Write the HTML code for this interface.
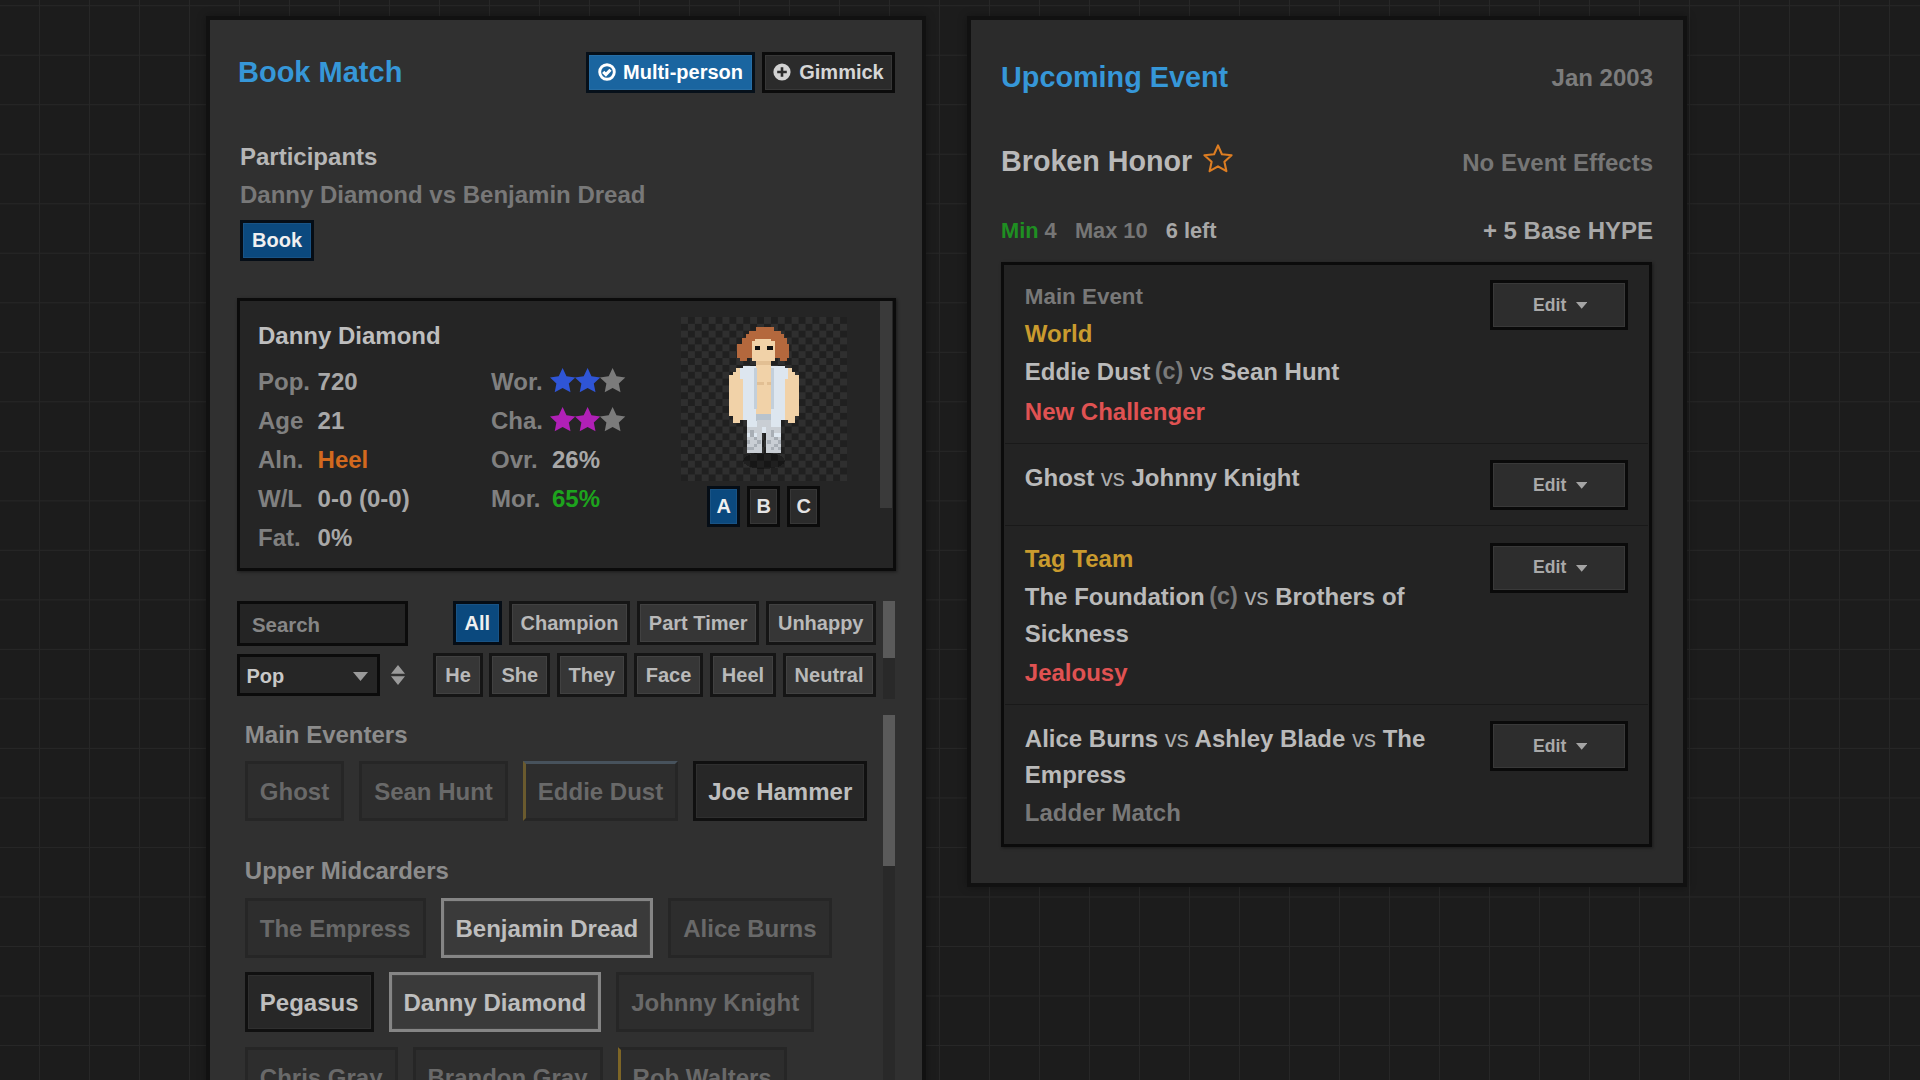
<!DOCTYPE html>
<html lang="en">
<head>
<meta charset="utf-8">
<title>Book Match</title>
<style>
*{box-sizing:border-box;margin:0;padding:0}
html,body{width:1920px;height:1080px;overflow:hidden}
body{
  background-color:#1c1c1c;
  background-image:
    linear-gradient(to right,#272727 0,#272727 1px,transparent 1px),
    linear-gradient(to bottom,#272727 0,#272727 1px,transparent 1px);
  background-size:50px 50px,50px 49.53px;
  background-position:39px 0,0 5.2px;
  font-family:"Liberation Sans",Arial,sans-serif;
  font-weight:bold;
  font-size:24px;
  color:#b4b4b4;
  position:relative;
}
.panel{position:absolute;border:4px solid #111;box-shadow:0 0 9px rgba(0,0,0,.3)}
#left{left:206px;top:16px;width:720px;height:1100px;background:#303030}
#right{left:967px;top:16px;width:720px;height:871px;background:#2b2b2b}
.abs{position:absolute;white-space:nowrap}
h1{position:absolute;font-size:29px;line-height:34px;color:#3697d8;font-weight:bold;white-space:nowrap}
h2{position:absolute;font-size:28.7px;line-height:34px;color:#b9b9b9;font-weight:bold;white-space:nowrap}
.btn{position:absolute;display:flex;align-items:center;justify-content:center;
  border:3px solid #0b0b0b;background:#303030;color:#d6d6d6;font-size:20px;white-space:nowrap;
  box-shadow:inset 0 0 0 1px rgba(255,255,255,.06)}
.btn.blue{background:#1a65a0;color:#fff;border-color:#06101a}
.btn.navy{background:#0b497e;color:#f0f0f0;border-color:#050d16}
.btn.f{background:#363636;color:#b9b9b9;border-color:#151515}
.dim{color:#7c7c7c}

#card{position:absolute;left:27px;top:278px;width:658.6px;height:272.8px;border:3px solid #0b0b0b;background:#252525;box-shadow:1px 1px 3px rgba(0,0,0,.45)}
#card .nm{position:absolute;left:18px;top:17.2px;line-height:36px;color:#bebebe;white-space:nowrap}
.st{position:absolute;line-height:36px;white-space:nowrap;color:#808080}
.st b{position:absolute;left:59.6px;top:0;color:#a8a8a8;font-weight:bold}
.st.r b{left:61px}
.st svg{position:absolute;left:59px;top:4px}
#sprite{position:absolute;left:441px;top:16px;width:166px;height:164.3px;display:block}
.ab{width:33px;height:41px;top:185px;font-size:20px;background:#2b2b2b;color:#e4e4e4}
.thumb{position:absolute;background:#3f3f3f}
.track{position:absolute;background:#292929}
#search{position:absolute;left:27px;top:581px;width:171px;height:44.5px;border:3px solid #0b0b0b;background:#242424;
  color:#868686;font-size:20.4px;line-height:42px;padding-left:12px}
#sel{position:absolute;left:27px;top:633.75px;width:142.7px;height:42px;border:3px solid #0b0b0b;background:#262626;
  color:#c8c8c8;font-size:20px;line-height:38.6px;padding-left:6.4px}
.frow{position:absolute;right:46.5px;display:flex;gap:6.5px}
.frow .btn{position:static;height:43.5px;padding:0 9px}
.gh{position:absolute;left:34.8px;line-height:36px;color:#8c8c8c;white-space:nowrap}
.rrow{position:absolute;left:34.8px;display:flex;gap:15px}
.w{height:60px;padding:2px 12px 0;border:3px solid #101010;background:#272727;color:#bebebe;display:flex;align-items:center;white-space:nowrap;
  box-shadow:inset 0 0 0 1px rgba(255,255,255,.04)}
.w.off{border-color:#262626;background:#2d2d2d;color:#696969;box-shadow:none}
.w.sel{border-color:#858585;background:#3a3a3a;color:#bebebe}

#evbox{position:absolute;left:30px;top:242px;width:651px;height:585.2px;border:3.2px solid #0b0b0b;background:#232323;box-shadow:1px 1px 3px rgba(0,0,0,.4)}
#evbox .in{position:absolute;left:.8px;top:.8px;right:0;bottom:0}
.ln{position:absolute;left:20px;line-height:36px;white-space:nowrap;color:#bababa}
.ln i{font-style:normal;font-weight:normal;color:#adadad}
.ln sup{font-size:23.4px;color:#7a7a7a;vertical-align:baseline;position:relative;top:-1px;margin-left:4.5px;line-height:0}
.sep{position:absolute;left:0;width:643px;height:1.4px;background:#191919}
.edit{left:485px;width:138px;height:50px;padding-left:2.5px;font-size:17.6px;color:#a9a9a9;background:#2d2d2d;border-color:#0a0a0a}
.edit svg{margin-left:9.3px;margin-top:1px}
.gold{color:#ca9b2e}.red{color:#e05252}.grey{color:#787878}
button{font:inherit;font-weight:bold;margin:0;padding:0;cursor:pointer;letter-spacing:normal;text-align:center}
#search{font-family:inherit;font-weight:bold;outline:none;border-radius:0;margin:0;padding-top:4px;padding-bottom:0}
#search::placeholder{color:#868686;opacity:1}
</style>
</head>
<body>

<section class="panel" id="left">
  <h1 style="left:28px;top:35px">Book Match</h1>

  <button type="button" class="btn blue" style="left:376px;top:32px;width:169px;height:41px">
    <svg width="18" height="18" viewBox="0 0 18 18" style="margin-right:7px;margin-top:-2px"><circle cx="9" cy="9" r="7.3" fill="none" stroke="#fff" stroke-width="2.9"/><path d="M5.2 8.9l2.7 2.7 4.6-4.9" fill="none" stroke="#fff" stroke-width="3.1"/></svg>Multi-person
  </button>
  <button type="button" class="btn" style="left:552px;top:32px;width:133px;height:41px;background:#2b2b2b">
    <svg width="18" height="18" viewBox="0 0 18 18" style="margin-right:8px;margin-top:-2px"><circle cx="9" cy="9" r="8.6" fill="#d2d2d2"/><path d="M9 4.2v9.6M4.2 9h9.6" stroke="#2b2b2b" stroke-width="2.6"/></svg>Gimmick
  </button>

  <div class="abs" style="left:30px;top:119px;line-height:36px;color:#b6b6b6">Participants</div>
  <div class="abs" style="left:30px;top:157px;line-height:36px;color:#787878">Danny Diamond vs Benjamin Dread</div>
  <button type="button" class="btn navy" style="left:30px;top:200px;width:74px;height:41px">Book</button>

  <div id="card">
    <div class="nm">Danny Diamond</div>
    <div class="st" style="left:18px;top:63.2px">Pop.<b>720</b></div>
    <div class="st" style="left:18px;top:102.2px">Age<b>21</b></div>
    <div class="st" style="left:18px;top:141.2px">Aln.<b style="color:#d2691e">Heel</b></div>
    <div class="st" style="left:18px;top:180.2px">W/L<b>0-0 (0-0)</b></div>
    <div class="st" style="left:18px;top:219.2px">Fat.<b>0%</b></div>
    <div class="st r" style="left:251px;top:63.2px">Wor.<svg width="76" height="25" viewBox="0 0 76 25"><g transform="translate(0,0)" fill="#2f55d6"><polygon points="12.6,0.1 16.5,8.2 25.3,9.4 18.8,15.5 20.5,24.3 12.6,20.1 4.7,24.3 6.4,15.5 -0.1,9.4 8.7,8.2" stroke-linejoin="round"/></g><g transform="translate(25,0)" fill="#2f55d6"><polygon points="12.6,0.1 16.5,8.2 25.3,9.4 18.8,15.5 20.5,24.3 12.6,20.1 4.7,24.3 6.4,15.5 -0.1,9.4 8.7,8.2" stroke-linejoin="round"/></g><g transform="translate(50,0)" fill="#7b7b7b"><polygon points="12.6,0.1 16.5,8.2 25.3,9.4 18.8,15.5 20.5,24.3 12.6,20.1 4.7,24.3 6.4,15.5 -0.1,9.4 8.7,8.2" stroke-linejoin="round"/></g></svg></div>
    <div class="st r" style="left:251px;top:102.2px">Cha.<svg width="76" height="25" viewBox="0 0 76 25"><g transform="translate(0,0)" fill="#b020b6"><polygon points="12.6,0.1 16.5,8.2 25.3,9.4 18.8,15.5 20.5,24.3 12.6,20.1 4.7,24.3 6.4,15.5 -0.1,9.4 8.7,8.2" stroke-linejoin="round"/></g><g transform="translate(25,0)" fill="#b020b6"><polygon points="12.6,0.1 16.5,8.2 25.3,9.4 18.8,15.5 20.5,24.3 12.6,20.1 4.7,24.3 6.4,15.5 -0.1,9.4 8.7,8.2" stroke-linejoin="round"/></g><g transform="translate(50,0)" fill="#7b7b7b"><polygon points="12.6,0.1 16.5,8.2 25.3,9.4 18.8,15.5 20.5,24.3 12.6,20.1 4.7,24.3 6.4,15.5 -0.1,9.4 8.7,8.2" stroke-linejoin="round"/></g></svg></div>
    <div class="st r" style="left:251px;top:141.2px">Ovr.<b>26%</b></div>
    <div class="st r" style="left:251px;top:180.2px">Mor.<b style="color:#1da31d">65%</b></div>
    <svg id="sprite" viewBox="0 0 48 48" preserveAspectRatio="none" shape-rendering="crispEdges"><defs><pattern id="ck" width="4" height="4" patternUnits="userSpaceOnUse"><rect width="4" height="4" fill="#202020"/><rect width="2" height="2" fill="#2f2f2f"/><rect x="2" y="2" width="2" height="2" fill="#2f2f2f"/></pattern></defs><rect width="48" height="48" fill="url(#ck)"/><ellipse cx="24" cy="42" rx="6" ry="2.4" fill="#000" fill-opacity=".3"/><rect x="21.6" y="3" width="5.4" height="1" fill="#b4683d"/><rect x="19.8" y="4" width="9" height="1" fill="#b4683d"/><rect x="18.7" y="5" width="11" height="1" fill="#b4683d"/><rect x="17.6" y="6" width="13" height="2" fill="#b4683d"/><rect x="16.25" y="8" width="15" height="4" fill="#b4683d"/><rect x="17" y="12" width="2" height="1" fill="#b4683d"/><rect x="28.6" y="12" width="2" height="1" fill="#b4683d"/><rect x="20.4" y="7" width="6.8" height="6" fill="#f1d2a8"/><rect x="21.5" y="6.4" width="4.6" height="1" fill="#f1d2a8"/><rect x="21.4" y="8.5" width="1.5" height="1.1" fill="#111"/><rect x="25" y="8.5" width="1.5" height="1.1" fill="#111"/><rect x="21.8" y="13" width="4.2" height="1" fill="#e2bf93"/><rect x="21.8" y="14" width="4.2" height="1" fill="#f1d2a8"/><rect x="16" y="15" width="2" height="1" fill="#f1d2a8"/><rect x="15" y="16" width="3" height="1" fill="#f1d2a8"/><rect x="14" y="17" width="4" height="12" fill="#f1d2a8"/><rect x="15" y="29" width="3" height="1" fill="#f1d2a8"/><rect x="15" y="30" width="2" height="1" fill="#f1d2a8"/><rect x="30" y="15" width="2" height="1" fill="#f1d2a8"/><rect x="30" y="16" width="3" height="1" fill="#f1d2a8"/><rect x="30" y="17" width="4" height="12" fill="#f1d2a8"/><rect x="30" y="29" width="3" height="1" fill="#f1d2a8"/><rect x="31" y="30" width="2" height="1" fill="#f1d2a8"/><rect x="18" y="14.4" width="12" height="15.6" fill="#dde6ef"/><rect x="19" y="30" width="10" height="4" fill="#dde6ef"/><rect x="17" y="15" width="1" height="3" fill="#dde6ef"/><rect x="30" y="15" width="1" height="3" fill="#dde6ef"/><rect x="21.8" y="14" width="4.2" height="14.4" fill="#f1d2a8"/><rect x="21" y="15" width="1" height="12" fill="#c3cfda"/><rect x="26" y="15" width="1" height="12" fill="#c3cfda"/><rect x="22" y="19" width="2" height="1" fill="#e2bf93"/><rect x="25" y="19" width="1" height="1" fill="#e2bf93"/><rect x="21.8" y="28.4" width="4.2" height="2" fill="#b8c3cd"/><rect x="22" y="30" width="4" height="2" fill="#c9ced4"/><rect x="19" y="32" width="4.3" height="7.6" fill="#c9ced4"/><rect x="24.7" y="32" width="4.3" height="7.6" fill="#c9ced4"/><rect x="19" y="34" width="3" height="1" fill="#dde6ef"/><rect x="26" y="34" width="3" height="1" fill="#dde6ef"/><rect x="20" y="34" width="1" height="1" fill="#a8aeb5"/><rect x="21" y="35" width="1" height="1" fill="#a8aeb5"/><rect x="19" y="36" width="1" height="1" fill="#a8aeb5"/><rect x="21" y="37" width="1" height="1" fill="#a8aeb5"/><rect x="20" y="38" width="1" height="1" fill="#a8aeb5"/><rect x="22" y="36" width="1" height="1" fill="#a8aeb5"/><rect x="20" y="33" width="1" height="1" fill="#a8aeb5"/><rect x="26" y="34" width="1" height="1" fill="#a8aeb5"/><rect x="27" y="35" width="1" height="1" fill="#a8aeb5"/><rect x="25" y="36" width="1" height="1" fill="#a8aeb5"/><rect x="27" y="37" width="1" height="1" fill="#a8aeb5"/><rect x="26" y="38" width="1" height="1" fill="#a8aeb5"/><rect x="28" y="36" width="1" height="1" fill="#a8aeb5"/><rect x="26" y="33" width="1" height="1" fill="#a8aeb5"/><rect x="19" y="38" width="1" height="1" fill="#a8aeb5"/><rect x="28" y="38" width="1" height="1" fill="#a8aeb5"/></svg>
    <button type="button" class="btn ab navy" style="left:467.3px">A</button>
    <button type="button" class="btn ab" style="left:507.3px">B</button>
    <button type="button" class="btn ab" style="left:547.3px">C</button>
    <div class="thumb" style="left:640px;top:0;width:12.4px;height:207px;background:#3a3a3a"></div>
  </div>
  <input id="search" type="text" placeholder="Search" aria-label="Search">
  <div class="frow" style="top:581.25px">
    <button type="button" class="btn navy">All</button><button type="button" class="btn f">Champion</button><button type="button" class="btn f">Part Timer</button><button type="button" class="btn f">Unhappy</button>
  </div>
  <div id="sel">Pop<svg width="15" height="9" viewBox="0 0 15 9" style="position:absolute;left:113.4px;top:15px"><path d="M0 0h15l-7.5 9z" fill="#9a9a9a"/></svg></div>
  <svg width="14" height="20" viewBox="0 0 14 20" style="position:absolute;left:181.2px;top:644.8px"><path d="M0 8.8h14l-7-8.8zM0 11.2h14l-7 8.8z" fill="#9a9a9a"/></svg>
  <div class="frow" style="top:633.3px">
    <button type="button" class="btn f">He</button><button type="button" class="btn f">She</button><button type="button" class="btn f">They</button><button type="button" class="btn f">Face</button><button type="button" class="btn f">Heel</button><button type="button" class="btn f">Neutral</button>
  </div>
  <div class="track" style="left:672.8px;top:581px;width:12.3px;height:97.5px"></div>
  <div class="thumb" style="left:672.8px;top:581px;width:12.3px;height:57px;background:#5a5a5a"></div>
  <div class="track" style="left:672.8px;top:695px;width:12.3px;height:400px"></div>
  <div class="thumb" style="left:672.8px;top:695px;width:12.3px;height:150.5px;background:#5a5a5a"></div>
  <div class="gh" style="top:696.7px">Main Eventers</div>
  <div class="rrow" style="top:741.2px">
    <button type="button" class="w off">Ghost</button><button type="button" class="w off">Sean Hunt</button><button type="button" class="w off" style="border-top-color:#47525c;border-left-color:#6a5a2e">Eddie Dust</button><button type="button" class="w">Joe Hammer</button>
  </div>
  <div class="gh" style="top:832.7px">Upper Midcarders</div>
  <div class="rrow" style="top:878.3px">
    <button type="button" class="w off">The Empress</button><button type="button" class="w sel">Benjamin Dread</button><button type="button" class="w off">Alice Burns</button>
  </div>
  <div class="rrow" style="top:952.3px">
    <button type="button" class="w">Pegasus</button><button type="button" class="w sel">Danny Diamond</button><button type="button" class="w off">Johnny Knight</button>
  </div>
  <div class="rrow" style="top:1027px">
    <button type="button" class="w off">Chris Gray</button><button type="button" class="w off">Brandon Gray</button><button type="button" class="w off" style="border-left-color:#7d6526">Rob Walters</button>
  </div>
</section>

<section class="panel" id="right">
  <h1 style="left:30px;top:40px;font-size:28.8px">Upcoming Event</h1>
  <div class="abs dim" style="right:30px;top:40px;line-height:36px">Jan 2003</div>
  <h2 style="left:30px;top:124px">Broken Honor</h2>
  <svg width="32" height="30" viewBox="0 0 32 30" style="position:absolute;left:231px;top:123px"><polygon points="16,2.4 19.9,11.2 29.6,12.2 22.4,18.7 24.4,28.2 16,23.4 7.6,28.2 9.6,18.7 2.4,12.2 12.1,11.2" fill="none" stroke="#dd7d22" stroke-width="2.1" stroke-linejoin="round"/></svg>
  <div class="abs" style="right:30px;top:125.4px;line-height:36px;color:#767676">No Event Effects</div>
  <div class="abs" style="left:30px;top:193.3px;line-height:36px;font-size:21.8px;color:#767676"><span style="color:#1f8f22">Min</span> 4 &nbsp; Max 10 &nbsp; <span style="color:#a8a8a8">6 left</span></div>
  <div class="abs" style="right:30px;top:193.3px;line-height:36px;color:#a8a8a8">+ 5 Base HYPE</div>
  <div id="evbox"><div class="in">
    <div class="ln grey" style="top:13.6px;font-size:22.4px">Main Event</div>
    <div class="ln gold" style="top:49.8px">World</div>
    <div class="ln" style="top:88.2px">Eddie Dust<sup>(c)</sup> <i>vs</i> Sean Hunt</div>
    <div class="ln red" style="top:128.6px">New Challenger</div>
    <button type="button" class="btn edit" style="top:14.5px">Edit<svg width="11.4" height="6.8" viewBox="0 0 12 7"><path d="M0 0h12l-6 7z" fill="#a4a4a4"/></svg></button>
    <div class="sep" style="top:177.3px"></div>
    <div class="ln" style="top:194.6px">Ghost <i>vs</i> Johnny Knight</div>
    <button type="button" class="btn edit" style="top:194.5px">Edit<svg width="11.4" height="6.8" viewBox="0 0 12 7"><path d="M0 0h12l-6 7z" fill="#a4a4a4"/></svg></button>
    <div class="sep" style="top:259px"></div>
    <div class="ln gold" style="top:275.3px">Tag Team</div>
    <div class="ln" style="top:313.2px">The Foundation<sup>(c)</sup> <i>vs</i> Brothers of</div>
    <div class="ln" style="top:350.3px">Sickness</div>
    <div class="ln red" style="top:388.9px">Jealousy</div>
    <button type="button" class="btn edit" style="top:277px">Edit<svg width="11.4" height="6.8" viewBox="0 0 12 7"><path d="M0 0h12l-6 7z" fill="#a4a4a4"/></svg></button>
    <div class="sep" style="top:438.3px"></div>
    <div class="ln" style="top:455.7px">Alice Burns <i>vs</i> Ashley Blade <i>vs</i> The</div>
    <div class="ln" style="top:490.9px">Empress</div>
    <div class="ln grey" style="top:529.7px">Ladder Match</div>
    <button type="button" class="btn edit" style="top:455.5px">Edit<svg width="11.4" height="6.8" viewBox="0 0 12 7"><path d="M0 0h12l-6 7z" fill="#a4a4a4"/></svg></button>
  </div></div>
</section>

</body>
</html>
